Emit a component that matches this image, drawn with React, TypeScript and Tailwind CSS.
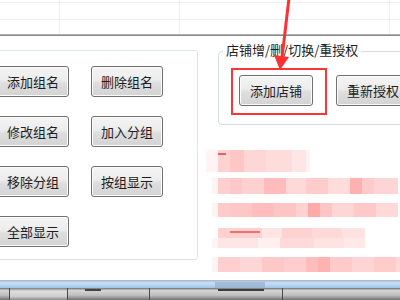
import React from "react";

const btn =
  "flex items-center justify-center h-[31px] border border-[#707070] rounded-[3px] bg-[linear-gradient(to_bottom,#f4f4f4_0%,#ececec_45%,#dedede_55%,#d3d3d3_100%)] shadow-[inset_0_0_0_1px_#fbfbfb] text-[13px] text-[#1e1e1e] leading-none whitespace-nowrap";

type Seg = [number, string];

function BlurRow({ segs, h, mt, ml = 0 }: { segs: Seg[]; h: string; mt: string; ml?: number }) {
  return (
    <div className={`flex ${h} ${mt}`} style={{ marginLeft: ml }}>
      {segs.map(([w, c], i) => (
        <div key={i} className={c} style={{ width: w }} />
      ))}
    </div>
  );
}

export default function App() {
  const cols = ["w-[60px]", "w-[120px]", "w-[210px]", "w-[40px]"];
  return (
    <div className="relative w-[400px] h-[300px] overflow-hidden bg-white font-['Noto_Sans_CJK_SC','Noto_Sans',sans-serif]">
      {/* top sheet grid */}
      <div className="flex flex-col h-[50px]">
        {["h-[3px]", "h-[17px]", "h-[14px]"].map((h, r) => (
          <div key={r} className={`flex ${h} ${r < 2 ? "border-b border-[#eceff3]" : ""}`}>
            {cols.map((c, i) => (
              <div key={i} className={`${c} shrink-0 border-r border-[#eceff3]`} />
            ))}
          </div>
        ))}
        <div className="h-[2px] bg-[#8a8a8a] border-t border-[#b0b0b0]" />
      </div>

      {/* middle */}
      <div className="flex items-start h-[230px]">
        {/* left panel */}
        <div className="-ml-[20px] w-[218px] h-[210px] shrink-0 border border-[#dde4eb] rounded-[3px] pt-[15px] pl-[16px]">
          <div className="grid grid-cols-[72px_72px] gap-x-[22px] gap-y-[19px]">
            <div className={btn}>添加组名</div>
            <div className={btn}>删除组名</div>
            <div className={btn}>修改组名</div>
            <div className={btn}>加入分组</div>
            <div className={btn}>移除分组</div>
            <div className={btn}>按组显示</div>
            <div className={btn}>全部显示</div>
          </div>
        </div>

        {/* right column */}
        <div className="ml-[20px] w-[200px] shrink-0 flex flex-col">
          <div className="relative mt-[1px] h-[74px] border border-[#d6dce4] rounded-[4px] pl-[20px] pt-[23px]">
            <span className="absolute top-[-11px] left-[4px] bg-white px-[3px] text-[13px] leading-[18px] text-[#1e1e1e] whitespace-nowrap">
              店铺增/删/切换/重授权
            </span>
            <div className="flex gap-[23px]">
              <div className={`${btn} w-[74px]`}>添加店铺</div>
              <div className={`${btn} w-[74px]`}>重新授权</div>
            </div>
          </div>

          {/* blurred content */}
          <div className="relative flex flex-col">
            <BlurRow
              h="h-[22px]"
              mt="mt-[25px]"
              ml={-12}
              segs={[
                [12, "bg-[#fff3f3]"],
                [12, "bg-[#ffd2d2]"],
                [14, "bg-[#ffc6c6]"],
                [22, "bg-[#ffd6d6]"],
                [26, "bg-[#ffdcdc]"],
                [14, "bg-[#ffe6e6]"],
                [4, "bg-[#fff2f2]"],
              ]}
            />
            <BlurRow
              h="h-[16px]"
              mt="mt-[6px]"
              ml={-6}
              segs={[
                [6, "bg-[#fff4f4]"],
                [12, "bg-[#ffcfcf]"],
                [12, "bg-[#ffc8c8]"],
                [22, "bg-[#ffd0d0]"],
                [22, "bg-[#ffbcbc]"],
                [20, "bg-[#ffd8d8]"],
                [22, "bg-[#ffcccc]"],
                [22, "bg-[#ffdcdc]"],
                [12, "bg-[#ffb0b0]"],
                [12, "bg-[#ffcaca]"],
                [24, "bg-[#ffd4d4]"],
              ]}
            />
            <BlurRow
              h="h-[14px]"
              mt="mt-[9px]"
              ml={-6}
              segs={[
                [6, "bg-[#fff4f4]"],
                [12, "bg-[#ffcaca]"],
                [22, "bg-[#ffc6c6]"],
                [22, "bg-[#ffbdbd]"],
                [22, "bg-[#ffc4c4]"],
                [12, "bg-[#ffd2d2]"],
                [12, "bg-[#ffa9a9]"],
                [12, "bg-[#ffc4c4]"],
                [22, "bg-[#ffd6d6]"],
                [22, "bg-[#ffc9c9]"],
                [22, "bg-[#ffd8d8]"],
              ]}
            />
            <div className="mt-[11px] flex flex-col">
              <BlurRow
                h="h-[10px]"
                mt="mt-0"
                segs={[
                  [44, "bg-[#ffd0d0]"],
                  [20, "bg-[#ffe4e4]"],
                  [30, "bg-[#ffd2d2]"],
                  [30, "bg-[#ffd8d8]"],
                  [23, "bg-[#ffe2e2]"],
                ]}
              />
              <BlurRow
                h="h-[10px]"
                mt="mt-0"
                ml={-6}
                segs={[
                  [6, "bg-[#fff4f4]"],
                  [40, "bg-[#ffe6e6]"],
                  [22, "bg-[#fff0f0]"],
                  [34, "bg-[#ffdada]"],
                  [30, "bg-[#ffe2e2]"],
                  [21, "bg-[#ffe8e8]"],
                ]}
              />
            </div>
            <BlurRow
              h="h-[15px]"
              mt="mt-[9px]"
              ml={-6}
              segs={[
                [6, "bg-[#fff4f4]"],
                [22, "bg-[#ffcfcf]"],
                [22, "bg-[#ffd6d6]"],
                [22, "bg-[#ffc8c8]"],
                [22, "bg-[#ffcdcd]"],
                [12, "bg-[#ffbcbc]"],
                [12, "bg-[#ffb2b2]"],
                [22, "bg-[#ffcaca]"],
                [22, "bg-[#ffd4d4]"],
                [22, "bg-[#ffcccc]"],
                [22, "bg-[#ffd8d8]"],
              ]}
            />
            {/* small red marks */}
            <div className="absolute left-0 top-[28px] w-[8px] h-[2px] bg-[#f05a5a]" />
            <div className="absolute left-[12px] top-[106px] w-[30px] h-[2px] bg-[#f07070]" />
          </div>
        </div>
      </div>

      {/* bottom bars */}
      <div className="relative h-[8px] bg-[linear-gradient(to_bottom,#a4b4c6_0%,#c8def4_35%,#b4d2f0_70%,#9ec2e8_100%)]">
        <div className="absolute left-[215px] top-[2px] w-[50px] h-[6px] bg-[#8fa8c4] opacity-60" />
      </div>
      <div className="relative flex h-[12px] bg-[linear-gradient(to_bottom,#6f6f6f_0%,#d4d4d4_20%,#c0c0c0_60%,#707070_100%)]">
        <div className="w-[10px] border-r border-[#4a4a4a]" />
        <div className="w-[58px] border-r border-[#4a4a4a] bg-[linear-gradient(to_bottom,#7a7a7a_0%,#dedede_25%,#cdcdcd_70%,#8a8a8a_100%)]" />
        <div className="w-[82px] border-r border-[#4a4a4a]" />
        <div className="w-[133px] border-r border-[#4a4a4a]" />
        <div className="absolute left-[85px] top-[1px] w-[16px] h-[2px] bg-[#444]" />
        <div className="absolute left-[218px] top-[1px] w-[46px] h-[2px] bg-[#3c3c3c]" />
      </div>

      {/* red highlight box */}
      <div className="absolute left-[231px] top-[68px] w-[96px] h-[47px] border-2 border-[#ff3535]" />

      {/* red arrow */}
      <svg className="absolute left-0 top-0" width="400" height="80" viewBox="0 0 400 80">
        <line x1="289" y1="-2" x2="282" y2="58" stroke="#ff3030" strokeWidth="3" />
        <polygon points="274,55 289,57 280,70" fill="#ff3030" />
      </svg>
    </div>
  );
}
